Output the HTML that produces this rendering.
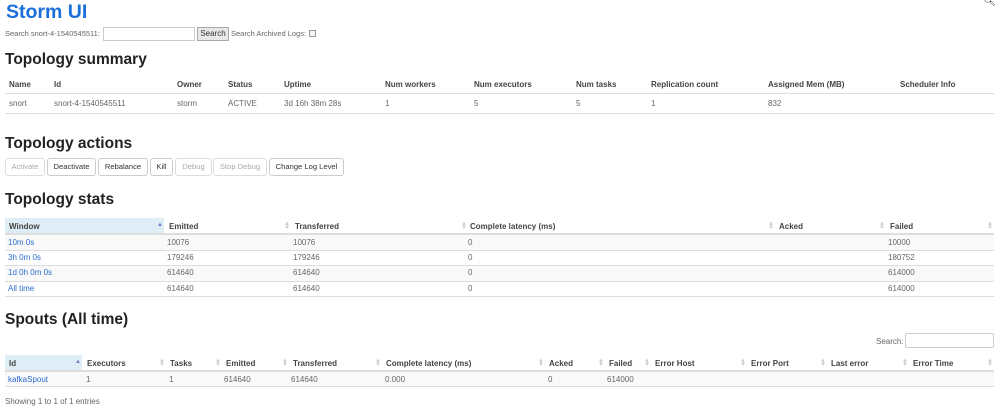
<!DOCTYPE html>
<html><head><meta charset="utf-8"><style>
*{margin:0;padding:0;box-sizing:border-box}
body{width:999px;height:409px;position:relative;background:#fff;font-family:"Liberation Sans",Arial,sans-serif;font-size:8px;color:#666;overflow:hidden}
.a{position:absolute;white-space:nowrap}
h1{position:absolute;left:6px;top:1px;font-size:19.5px;color:#1a6fd9;font-weight:bold;white-space:nowrap}
h2{position:absolute;left:5px;font-size:15.5px;color:#222;font-weight:bold;white-space:nowrap}
.th{position:absolute;font-weight:bold;color:#444;white-space:nowrap}
.ln{position:absolute;height:1px;background:#ddd}
.ln2{position:absolute;height:2px;background:#ddd}
.row{position:absolute;background:#f9f9f9}
.lk{color:#2a6dd0}
.btn{position:absolute;top:158px;height:18px;border:1px solid #ccc;border-radius:3px;background:#fff;color:#333;text-align:center;line-height:16px;font-size:7.6px}
.dis{color:#aaa;border-color:#ddd}
.s{position:absolute;color:#ccc;font-size:6px;line-height:4px}
.sa{color:#6a7fcc}
input{position:absolute;border:1px solid #ccc;background:#fff}
</style></head><body>
<h1>Storm UI</h1>
<div class="a" style="right:3px;top:-4px;font-size:10px;color:#222">&#x1F50D;&#xFE0E;</div>
<div class="a" style="left:5px;top:29px;font-size:7.5px">Search snort-4-1540545511:</div>
<input style="left:103px;top:27px;width:92px;height:14px">
<div class="a" style="left:197px;top:27px;width:32px;height:14px;border:1px solid #aaa;background:#e8e8e8;text-align:center;line-height:12px;color:#333">Search</div>
<div class="a" style="left:231px;top:29px;font-size:7.5px">Search Archived Logs:</div>
<div class="a" style="left:309px;top:30px;width:7px;height:7px;border:1px solid #999;background:#f4f4f4"></div>

<h2 style="top:51px">Topology summary</h2>
<div class="th" style="left:9px;top:80px">Name</div>
<div class="th" style="left:54px;top:80px">Id</div>
<div class="th" style="left:177px;top:80px">Owner</div>
<div class="th" style="left:228px;top:80px">Status</div>
<div class="th" style="left:284px;top:80px">Uptime</div>
<div class="th" style="left:385px;top:80px">Num workers</div>
<div class="th" style="left:474px;top:80px">Num executors</div>
<div class="th" style="left:576px;top:80px">Num tasks</div>
<div class="th" style="left:651px;top:80px">Replication count</div>
<div class="th" style="left:768px;top:80px">Assigned Mem (MB)</div>
<div class="th" style="left:900px;top:80px">Scheduler Info</div>
<div class="ln" style="left:5px;top:93px;width:989px"></div>
<div class="a" style="left:9px;top:99px">snort</div>
<div class="a" style="left:54px;top:99px">snort-4-1540545511</div>
<div class="a" style="left:177px;top:99px">storm</div>
<div class="a" style="left:228px;top:99px">ACTIVE</div>
<div class="a" style="left:284px;top:99px">3d 16h 38m 28s</div>
<div class="a" style="left:385px;top:99px">1</div>
<div class="a" style="left:474px;top:99px">5</div>
<div class="a" style="left:576px;top:99px">5</div>
<div class="a" style="left:651px;top:99px">1</div>
<div class="a" style="left:768px;top:99px">832</div>
<div class="ln" style="left:5px;top:113px;width:989px"></div>

<h2 style="top:135px">Topology actions</h2>
<div class="btn dis" style="left:5px;width:40px">Activate</div>
<div class="btn" style="left:47px;width:49px">Deactivate</div>
<div class="btn" style="left:98px;width:50px">Rebalance</div>
<div class="btn" style="left:150px;width:23px">Kill</div>
<div class="btn dis" style="left:175px;width:37px">Debug</div>
<div class="btn dis" style="left:213px;width:54px">Stop Debug</div>
<div class="btn" style="left:269px;width:75px">Change Log Level</div>

<h2 style="top:191px">Topology stats</h2>
<div class="row" style="left:5px;top:218px;width:159px;height:16px;background:#dfedf6"></div>
<div class="th" style="left:9px;top:222px">Window</div>
<div class="th" style="left:169px;top:222px">Emitted</div>
<div class="th" style="left:295px;top:222px">Transferred</div>
<div class="th" style="left:470px;top:222px">Complete latency (ms)</div>
<div class="th" style="left:779px;top:222px">Acked</div>
<div class="th" style="left:890px;top:222px">Failed</div>
<div class="s sa" style="left:157px;top:223px">▲</div>
<div class="s" style="left:284px;top:222px">▲<br>▼</div>
<div class="s" style="left:461px;top:222px">▲<br>▼</div>
<div class="s" style="left:768px;top:222px">▲<br>▼</div>
<div class="s" style="left:879px;top:222px">▲<br>▼</div>
<div class="s" style="left:987px;top:222px">▲<br>▼</div>
<div class="ln2" style="left:5px;top:233px;width:989px"></div>
<div class="row" style="left:5px;top:235px;width:989px;height:15px"></div>
<div class="row" style="left:5px;top:266px;width:989px;height:15px"></div>
<div class="ln" style="left:5px;top:250px;width:989px"></div>
<div class="ln" style="left:5px;top:265px;width:989px"></div>
<div class="ln" style="left:5px;top:281px;width:989px"></div>
<div class="ln" style="left:5px;top:296px;width:989px"></div>
<div class="a lk" style="left:8px;top:238px">10m 0s</div><div class="a" style="left:167px;top:238px">10076</div><div class="a" style="left:293px;top:238px">10076</div><div class="a" style="left:468px;top:238px">0</div><div class="a" style="left:888px;top:238px">10000</div>
<div class="a lk" style="left:8px;top:253px">3h 0m 0s</div><div class="a" style="left:167px;top:253px">179246</div><div class="a" style="left:293px;top:253px">179246</div><div class="a" style="left:468px;top:253px">0</div><div class="a" style="left:888px;top:253px">180752</div>
<div class="a lk" style="left:8px;top:268px">1d 0h 0m 0s</div><div class="a" style="left:167px;top:268px">614640</div><div class="a" style="left:293px;top:268px">614640</div><div class="a" style="left:468px;top:268px">0</div><div class="a" style="left:888px;top:268px">614000</div>
<div class="a lk" style="left:8px;top:284px">All time</div><div class="a" style="left:167px;top:284px">614640</div><div class="a" style="left:293px;top:284px">614640</div><div class="a" style="left:468px;top:284px">0</div><div class="a" style="left:888px;top:284px">614000</div>

<h2 style="top:311px">Spouts (All time)</h2>
<div class="a" style="left:876px;top:337px;color:#666">Search:</div>
<input style="left:905px;top:333px;width:89px;height:15px;border-radius:2px">
<div class="row" style="left:5px;top:355px;width:77px;height:16px;background:#dfedf6"></div>
<div class="th" style="left:9px;top:359px">Id</div>
<div class="th" style="left:87px;top:359px">Executors</div>
<div class="th" style="left:170px;top:359px">Tasks</div>
<div class="th" style="left:226px;top:359px">Emitted</div>
<div class="th" style="left:293px;top:359px">Transferred</div>
<div class="th" style="left:386px;top:359px">Complete latency (ms)</div>
<div class="th" style="left:549px;top:359px">Acked</div>
<div class="th" style="left:609px;top:359px">Failed</div>
<div class="th" style="left:655px;top:359px">Error Host</div>
<div class="th" style="left:751px;top:359px">Error Port</div>
<div class="th" style="left:831px;top:359px">Last error</div>
<div class="th" style="left:913px;top:359px">Error Time</div>
<div class="s sa" style="left:75px;top:360px">▲</div>
<div class="s" style="left:159px;top:359px">▲<br>▼</div>
<div class="s" style="left:215px;top:359px">▲<br>▼</div>
<div class="s" style="left:282px;top:359px">▲<br>▼</div>
<div class="s" style="left:375px;top:359px">▲<br>▼</div>
<div class="s" style="left:538px;top:359px">▲<br>▼</div>
<div class="s" style="left:598px;top:359px">▲<br>▼</div>
<div class="s" style="left:644px;top:359px">▲<br>▼</div>
<div class="s" style="left:740px;top:359px">▲<br>▼</div>
<div class="s" style="left:820px;top:359px">▲<br>▼</div>
<div class="s" style="left:902px;top:359px">▲<br>▼</div>
<div class="s" style="left:987px;top:359px">▲<br>▼</div>
<div class="ln2" style="left:5px;top:370px;width:989px"></div>
<div class="row" style="left:5px;top:372px;width:989px;height:14px"></div>
<div class="ln" style="left:5px;top:386px;width:989px"></div>
<div class="a lk" style="left:8px;top:375px">kafkaSpout</div>
<div class="a" style="left:86px;top:375px">1</div>
<div class="a" style="left:169px;top:375px">1</div>
<div class="a" style="left:224px;top:375px">614640</div>
<div class="a" style="left:291px;top:375px">614640</div>
<div class="a" style="left:385px;top:375px">0.000</div>
<div class="a" style="left:548px;top:375px">0</div>
<div class="a" style="left:607px;top:375px">614000</div>
<div class="a" style="left:5px;top:397px;color:#666">Showing 1 to 1 of 1 entries</div>
</body></html>
